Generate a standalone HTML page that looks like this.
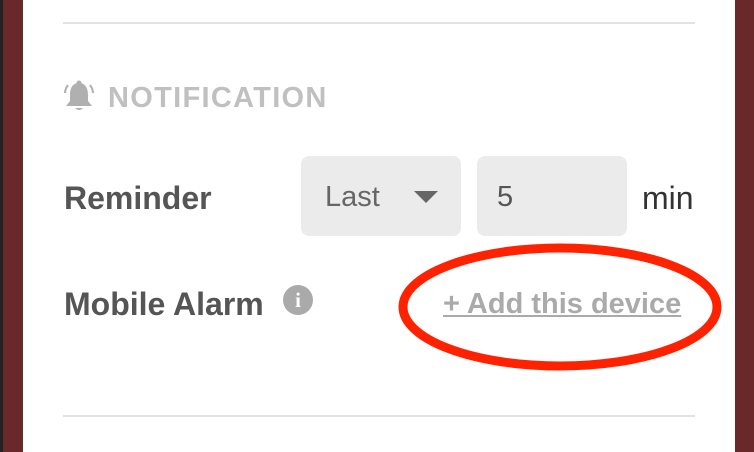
<!DOCTYPE html>
<html><head><style>
body{margin:0;width:754px;height:452px;overflow:hidden;background:#fff;font-family:"Liberation Sans",sans-serif;position:relative}
.a{position:absolute;line-height:1;white-space:nowrap}
</style></head><body>
<div class="a" style="left:0;top:0;width:3px;height:452px;background:#222"></div>
<div class="a" style="left:3px;top:0;width:20px;height:452px;background:#69282a"></div>
<div class="a" style="left:735px;top:0;width:19px;height:452px;background:#69282a"></div>
<div class="a" style="left:63px;top:22px;width:632px;height:2px;background:#e2e2e2"></div>
<div class="a" style="left:63px;top:415px;width:632px;height:2px;background:#e2e2e2"></div>
<svg class="a" style="left:63px;top:79px" width="32" height="34" viewBox="0 0 32 34">
<path d="M16 4 C9 4 7 10 7 16 L7 22 L3 27 L29 27 L25 22 L25 16 C25 10 23 4 16 4Z" fill="#b0b0b0"/>
<circle cx="16" cy="4" r="2.5" fill="#b0b0b0"/>
<path d="M12 29 Q16 33 20 29Z" fill="#b0b0b0"/>
<path d="M5 6 Q2 10 2 14 M27 6 Q30 10 30 14" stroke="#b0b0b0" stroke-width="2" fill="none"/>
</svg>
<div class="a" style="left:108px;top:84px;font-size:29px;font-weight:bold;color:#c0c0c0;letter-spacing:1.3px">NOTIFICATION</div>
<div class="a" style="left:64px;top:182px;font-size:32px;font-weight:bold;color:#555">Reminder</div>
<div class="a" style="left:301px;top:156px;width:160px;height:80px;background:#ebebeb;border-radius:8px"></div>
<div class="a" style="left:325px;top:183px;font-size:29px;color:#666">Last</div>
<svg class="a" style="left:414px;top:191px" width="24" height="12"><path d="M0 0H24L12 12Z" fill="#666"/></svg>
<div class="a" style="left:477px;top:156px;width:150px;height:80px;background:#ebebeb;border-radius:8px"></div>
<div class="a" style="left:497px;top:183px;font-size:29px;color:#555">5</div>
<div class="a" style="left:642px;top:182px;font-size:32px;color:#333">min</div>
<div class="a" style="left:64px;top:288px;font-size:32px;font-weight:bold;color:#555">Mobile Alarm</div>
<div class="a" style="left:283px;top:285px;width:30px;height:30px;border-radius:50%;background:#aaa;color:#fff;font-weight:bold;font-size:21px;text-align:center;line-height:30px;font-family:'Liberation Serif',serif">i</div>
<div class="a" style="left:443px;top:290px;font-size:29px;font-weight:bold;color:#aaa;text-decoration:underline">+ Add this device</div>
<svg class="a" style="left:0;top:0" width="754" height="452"><ellipse cx="560" cy="307" rx="157" ry="59" fill="none" stroke="#ff2200" stroke-width="9"/></svg>
</body></html>
